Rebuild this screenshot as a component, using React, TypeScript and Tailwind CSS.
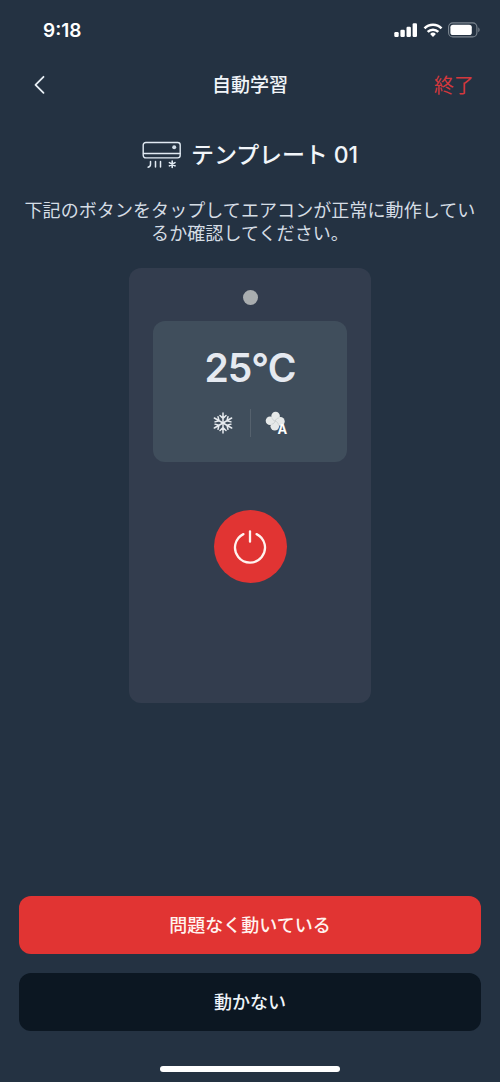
import React from 'react';

const CellularIcon = () => (
    <svg width="24" height="16" viewBox="0 0 24 16" fill="#fff" className="shrink-0">
        <rect x="0.3" y="10" width="4.4" height="5" rx="1.2" />
        <rect x="6.4" y="7.7" width="4.4" height="7.3" rx="1.2" />
        <rect x="12.5" y="4.7" width="4.4" height="10.3" rx="1.2" />
        <rect x="18.6" y="1.2" width="4.4" height="13.8" rx="1.2" />
    </svg>
);

const WifiIcon = () => (
    <svg width="20" height="16" viewBox="0 0 20 16" fill="none" stroke="#fff" strokeWidth="2.6" className="shrink-0">
        <path d="M1.5 6.3a12 12 0 0 1 17 0" />
        <path d="M4.7 9.9a7.5 7.5 0 0 1 10.6 0" />
        <path d="M10 15l-2.9-3a4.1 4.1 0 0 1 5.8 0z" fill="#fff" stroke="none" />
    </svg>
);

const BatteryIcon = () => (
    <svg width="33" height="16" viewBox="0 0 33 16" fill="none" className="shrink-0">
        <rect x="0.6" y="0.9" width="28.3" height="14" rx="4.2" stroke="#7d8791" strokeWidth="1.1" />
        <rect x="2.4" y="2.7" width="21.4" height="10.4" rx="2.6" fill="#fff" />
        <path d="M30.3 5.6c1.7.7 1.7 3.9 0 4.6z" fill="#7d8791" />
    </svg>
);

const AirConditionerIcon = () => (
    <svg width="40" height="28" viewBox="0 0 40 28" fill="none" stroke="#e1eaf3" strokeWidth="1.4" strokeLinecap="round">
        <rect x="1.2" y="1.5" width="37" height="15.4" rx="2.6" />
        <path d="M1.5 12.5h36.4" />
        <circle cx="32.2" cy="6.3" r="2" fill="#d3dee8" stroke="none" />
        <path d="M8.5 20.4v3.2q0 2.2-2.4 2.6M13.5 20.4v5.6M18.5 20.4v5.6" strokeWidth="1.5" />
        <path d="M30.2 20v6.4M27.4 21.6l5.6 3.2M33 21.6l-5.6 3.2" strokeWidth="1.6" />
    </svg>
);

const SnowflakeIcon = () => (
    <svg width="22" height="22" viewBox="-11 -11 22 22" fill="none" stroke="#e6eaee" strokeWidth="1.5" strokeLinecap="round">
        {[0, 60, 120, 180, 240, 300].map((angle) => (
            <path key={angle} d="M0 0V-10M0 -4.6L-3 -7.5M0 -4.6L3 -7.5" transform={`rotate(${angle})`} />
        ))}
    </svg>
);

const FanAutoIcon = () => (
    <div className="relative h-6 w-6">
        <svg width="24" height="24" viewBox="0 0 24 24">
            <g fill="#e6e9e9">
                <circle cx="10.6" cy="5" r="4.3" />
                <circle cx="15.4" cy="10.4" r="4.3" />
                <circle cx="9.8" cy="15.2" r="4.3" />
                <circle cx="5" cy="9.8" r="4.3" />
                <circle cx="10.2" cy="10.1" r="3.6" />
            </g>
            <path
                d="M10.2 10.1C8.4 9.5 7.2 8.3 6.8 6.5M10.2 10.1C10.8 8.3 12 7.2 13.9 6.9M10.2 10.1c1.8.5 2.9 1.8 3.2 3.7M10.2 10.1c-.6 1.8-1.8 2.8-3.7 3.1"
                fill="none"
                stroke="#b3babd"
                strokeWidth="0.5"
            />
            <path d="M16.6 13.8L12.8 24h10.9l-3.8-10.2z" fill="#404e5c" />
        </svg>
        <span className="absolute left-[13px] top-[11px] text-[13px] font-bold leading-[15px] text-white">A</span>
    </div>
);

const PowerIcon = () => (
    <svg width="36" height="36" viewBox="-18 -18 36 36" fill="none" stroke="#fff3ef" strokeWidth="2.3" strokeLinecap="round">
        <path d="M-6.6 -12.9A15 15 0 1 0 6.6 -12.9" />
        <path d="M0 -15.5V-5.3" />
    </svg>
);

const StatusBar = () => (
    <div className="flex h-[60px] shrink-0 items-center justify-between pl-[43px] pr-[19px]">
        <span className="pt-px text-[19px] font-semibold leading-6 text-white">9:18</span>
        <div className="flex items-center gap-[5px]">
            <CellularIcon />
            <WifiIcon />
            <BatteryIcon />
        </div>
    </div>
);

const Header = () => (
    <header className="grid h-[50px] shrink-0 grid-cols-3 items-center pl-[33px] pr-[26px]">
        <button aria-label="戻る" className="justify-self-start">
            <svg width="13" height="20" viewBox="0 0 13 20" fill="none" stroke="#e8eff5" strokeWidth="1.8" strokeLinecap="round" strokeLinejoin="round">
                <path d="M10.5 1.8L2.5 9.8l8 8" />
            </svg>
        </button>
        <h1 className="-ml-[7px] justify-self-center pt-0.5 text-[19px] font-medium leading-6 text-[#f1f5f9]">自動学習</h1>
        <button className="justify-self-end pt-0.5 text-[20px] font-normal leading-6 text-[#d3383d]">終了</button>
    </header>
);

const RemotePreview = () => (
    <section className="mx-auto mt-[23px] flex h-[435px] w-[242px] shrink-0 flex-col items-center rounded-xl bg-[#333d4e] pt-[22px]">
        <div className="h-[15px] w-[15px] rounded-full bg-[#a9adaf]" />
        <div className="mt-4 flex h-[141px] w-[194px] flex-col items-center rounded-xl bg-[#404e5c] pt-[23px]">
            <div className="text-[39px] font-semibold leading-[48px] tracking-[-0.9px] text-[#e5e9f0]">25°C</div>
            <div className="mt-[17px] flex items-center">
                <SnowflakeIcon />
                <div className="ml-4 mr-[14px] h-7 w-px bg-[#55616d]" />
                <FanAutoIcon />
            </div>
        </div>
        <button
            aria-label="電源"
            className="mt-12 flex h-[73px] w-[73px] items-center justify-center rounded-full bg-[#e13433]"
        >
            <PowerIcon />
        </button>
    </section>
);

export default function App() {
    return (
        <div className="flex h-[1082px] w-[500px] flex-col overflow-hidden bg-[#243242] font-[Inter,'Noto_Sans_CJK_JP',sans-serif]">
            <StatusBar />
            <Header />

            {/* Template name */}
            <div className="mt-[31px] flex h-7 shrink-0 items-center justify-center gap-[9px]">
                <AirConditionerIcon />
                <h2 className="whitespace-nowrap text-[23px] font-medium leading-7 tracking-[-0.1px] text-[#f1f5f9]">テンプレート 01</h2>
            </div>

            <p className="mt-[30px] shrink-0 text-center text-[18px] font-normal leading-[23px] tracking-[0.08px] text-[#d5dde5]">
                下記のボタンをタップしてエアコンが正常に動作してい
                <br />
                るか確認してください。
            </p>

            <RemotePreview />

            {/* Result buttons */}
            <div className="mt-auto flex flex-col gap-[19px] px-[19px]">
                <button className="h-[58px] rounded-xl bg-[#e13433] text-[18px] font-medium text-[#fff3ef]">
                    問題なく動いている
                </button>
                <button className="h-[58px] rounded-xl bg-[#0c1722] text-[18px] font-medium text-[#eef3f8]">
                    動かない
                </button>
            </div>

            {/* Home indicator */}
            <div className="mx-auto mb-[10px] mt-[35px] h-[6px] w-[180px] shrink-0 rounded-full bg-white" />
        </div>
    );
}
